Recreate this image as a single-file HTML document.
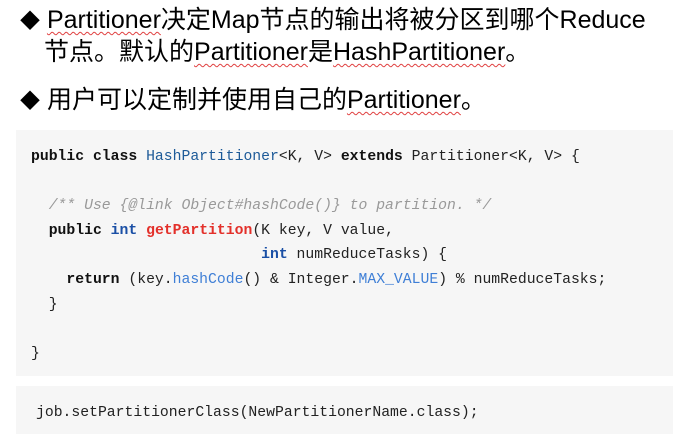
<!DOCTYPE html>
<html><head><meta charset="utf-8"><style>
body{margin:0;width:685px;height:434px;background:#fff;overflow:hidden;position:relative;font-family:"Liberation Sans","Noto Sans CJK SC",sans-serif;}
.h{position:absolute;left:20px;font-size:25px;color:#000;white-space:nowrap;letter-spacing:0}
.u{text-decoration:underline wavy #e04040;text-decoration-thickness:1px;text-underline-offset:3px}
.b1{position:absolute;left:16px;top:130px;width:657px;height:246px;background:#f6f6f6}
.b2{position:absolute;left:16px;top:386px;width:657px;height:48px;background:#f6f6f6}
pre{margin:0;position:absolute;font-family:"Liberation Mono",monospace;font-size:14.75px;line-height:24.6px;color:#222}
.k{font-weight:bold;color:#111}
.t{color:#1d5a98}
.r{color:#e3302a;font-weight:bold}
.i{color:#1a4fa5;font-weight:bold}
.l{color:#3f7fd6}
.c{color:#999;font-style:italic}
</style></head><body>
<div class="h" style="top:0px"><span style="font-size:20px">◆</span> <span class="u">Partitioner</span>决定Map节点的输出将被分区到哪个Reduce</div>
<div class="h" style="top:32px;left:44px">节点。默认的<span class="u">Partitioner</span>是<span class="u">HashPartitioner</span>。</div>
<div class="h" style="top:80px"><span style="font-size:20px">◆</span> 用户可以定制并使用自己的<span class="u">Partitioner</span>。</div>
<div class="b1"></div>
<div class="b2"></div>
<pre style="left:31px;top:145px"><span class="k">public class</span> <span class="t">HashPartitioner</span>&lt;K, V&gt; <span class="k">extends</span> Partitioner&lt;K, V&gt; {

  <span class="c">/** Use {@link Object#hashCode()} to partition. */</span>
  <span class="k">public</span> <span class="i">int</span> <span class="r">getPartition</span>(K key, V value,
                          <span class="i">int</span> numReduceTasks) {
    <span class="k">return</span> (key.<span class="l">hashCode</span>() &amp; Integer.<span class="l">MAX_VALUE</span>) % numReduceTasks;
  }

}</pre>
<pre style="left:36px;top:401px">job.setPartitionerClass(NewPartitionerName.class);</pre>
</body></html>
